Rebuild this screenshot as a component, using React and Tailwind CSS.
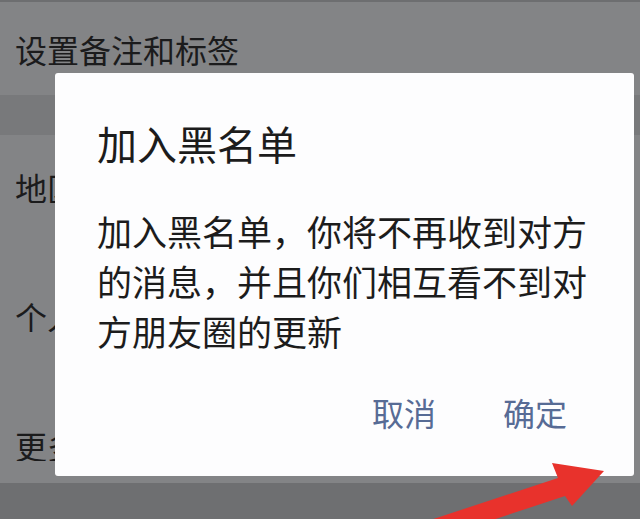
export default function App() {
  const font = { fontFamily: '"Noto Sans CJK SC", "Noto Sans", sans-serif' };
  return (
    <div className="relative w-[640px] h-[519px] overflow-hidden bg-[#838486]" style={font}>
      <div className="flex flex-col">
        <div className="h-[2px] bg-[#6d6e70]" />
        <div className="h-[93px] flex items-center pl-[15px] text-[32px] leading-none text-[#1b1b1c]">设置备注和标签</div>
        <div className="h-[40px] bg-[#78797b]" />
        <div className="h-[129px] pt-[36px] pl-[15px] text-[32px] leading-none text-[#1b1b1c]">
          <div className="w-[40px] overflow-hidden whitespace-nowrap">地区</div>
        </div>
        <div className="h-[129px] pt-[36px] pl-[15px] text-[32px] leading-none text-[#1b1b1c]">
          <div className="w-[40px] overflow-hidden whitespace-nowrap">个人相册</div>
        </div>
        <div className="h-[90px] pt-[36px] pl-[15px] text-[32px] leading-none text-[#1b1b1c]">
          <div className="w-[40px] overflow-hidden whitespace-nowrap">更多信息</div>
        </div>
        <div className="h-[36px] bg-[#6e6f71]" />
      </div>

      <div className="absolute left-[55px] top-[73px] w-[579px] rounded-[3px] bg-[#fdfdfe] pl-[42px] pt-[50px] pb-[48px]">
        <div className="text-[40px] leading-none text-[#1c1c1c]">加入黑名单</div>
        <div className="mt-[43px] w-[500px] text-[35px] leading-[50px] text-[#1c1c1c]">
          加入黑名单，你将不再收到对方的消息，并且你们相互看不到对方朋友圈的更新
        </div>
        <div className="mt-[40px] flex justify-end gap-[67px] pr-[67px] text-[32px] leading-none text-[#576b95]">
          <span>取消</span>
          <span>确定</span>
        </div>
      </div>

      <svg className="absolute left-0 top-0" width="640" height="519" viewBox="0 0 640 519">
        <polygon
          points="400,530 558,478 552,463 604,471 572,506 565,496 450,534"
          fill="#e8322c"
        />
      </svg>
    </div>
  );
}
